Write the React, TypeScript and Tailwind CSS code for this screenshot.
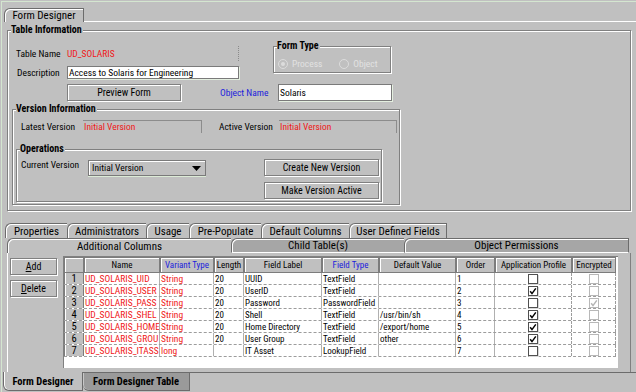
import React from 'react';

const etched = 'border border-[#808080] shadow-[inset_1px_1px_0_#fff,1px_1px_0_#fff]';
const red = 'text-[#f01818]';
const blue = 'text-[#1c1cdc]';
const lbl = 'text-[9.5px] leading-[12px] whitespace-nowrap';

type Row = {
  n: number;
  name: string;
  vt: string;
  len: string;
  label: string;
  ft: string;
  def: string;
  order: string;
  app: boolean;
  enc: boolean;
};

// names are cut at the column edge, as the table shows them
const rows: Row[] = [
  { n: 1, name: 'UD_SOLARIS_UID', vt: 'String', len: '20', label: 'UUID', ft: 'TextField', def: '', order: '1', app: false, enc: false },
  { n: 2, name: 'UD_SOLARIS_USER', vt: 'String', len: '20', label: 'UserID', ft: 'TextField', def: '', order: '2', app: true, enc: false },
  { n: 3, name: 'UD_SOLARIS_PASS', vt: 'String', len: '20', label: 'Password', ft: 'PasswordField', def: '', order: '3', app: false, enc: true },
  { n: 4, name: 'UD_SOLARIS_SHEL', vt: 'String', len: '20', label: 'Shell', ft: 'TextField', def: '/usr/bin/sh', order: '4', app: true, enc: false },
  { n: 5, name: 'UD_SOLARIS_HOME', vt: 'String', len: '20', label: 'Home Directory', ft: 'TextField', def: '/export/home', order: '5', app: true, enc: false },
  { n: 6, name: 'UD_SOLARIS_GROU', vt: 'String', len: '20', label: 'User Group', ft: 'TextField', def: 'other', order: '6', app: true, enc: false },
  { n: 7, name: 'UD_SOLARIS_ITASS', vt: 'long', len: '', label: 'IT Asset', ft: 'LookupField', def: '', order: '7', app: false, enc: false },
];

function GroupBox({ title, className, children }: { title: string; className?: string; children?: React.ReactNode }) {
  return (
    <div className={`relative ${etched} ${className ?? ''}`}>
      <span className="absolute -top-[7px] left-[3px] whitespace-nowrap bg-[#c0c0c0] pr-[1px] text-[10px] font-bold leading-[12px] text-black">
        {title}
      </span>
      {children}
    </div>
  );
}

function Btn({ children, className }: { children: React.ReactNode; className?: string }) {
  return (
    <div className={`flex items-center justify-center whitespace-nowrap bg-[#c0c0c0] text-[10px] leading-[12px] ${etched} ${className ?? ''}`}>
      {children}
    </div>
  );
}

function Field({ value, className }: { value: string; className?: string }) {
  return (
    <div
      className={`flex items-center whitespace-nowrap bg-white pl-[1px] text-[9.5px] leading-[12px] border border-[#7a7a7a] shadow-[1px_1px_0_#e4efe0] ${className ?? ''}`}
    >
      {value}
    </div>
  );
}

function Tab({ label, className, dark }: { label: string; className?: string; dark?: boolean }) {
  return (
    <div
      className={`flex items-center justify-center rounded-tl-[6px] border-t border-l border-[#6c6c6c] shadow-[inset_1px_1px_0_#fff] text-[11px] leading-[13px] whitespace-nowrap ${
        dark ? 'bg-[#a6a6a6]' : 'bg-[#c0c0c0]'
      } ${className ?? ''}`}
    >
      {label}
    </div>
  );
}

function Check({ checked, disabled }: { checked: boolean; disabled?: boolean }) {
  return (
    <div
      className={`flex h-[10px] w-[10px] items-center justify-center bg-white border ${
        disabled ? 'border-[#b8b8b8]' : 'border-[#505050] shadow-[1px_1px_0_#d8d8d8]'
      }`}
    >
      {checked && (
        <svg width="8" height="8" viewBox="0 0 8 8">
          <path d="M1.2 4.2 L3 6.6 L6.8 1.4" stroke={disabled ? '#b4b4b4' : '#000'} strokeWidth="1.5" fill="none" />
        </svg>
      )}
    </div>
  );
}

function Radio({ on, label }: { on?: boolean; label: string }) {
  return (
    <div className="flex items-center gap-[4px] text-[9.5px] leading-[12px] text-[#e2e2e2]">
      <div className="flex h-[10px] w-[10px] items-center justify-center rounded-full border border-[#dcdcdc]">
        {on && <div className="h-[4px] w-[4px] rounded-full bg-[#dcdcdc]" />}
      </div>
      {label}
    </div>
  );
}

const headCell = 'flex items-center justify-center h-full border border-[#7c7c7c] shadow-[inset_1px_1px_0_#fff] bg-[#c0c0c0] whitespace-nowrap overflow-hidden';
const cell = 'h-full overflow-hidden whitespace-nowrap pl-[1px] border-r border-[#b0b0b0]';

export default function App() {
  return (
    <div className="font-['Roboto_Condensed','Liberation_Sans',sans-serif] w-[636px] h-[392px] overflow-hidden bg-[#c0c0c0] pt-[1px] pl-[1px] text-black">
      <div className="flex h-full flex-col border-t border-l border-[#d4e6d0]">
        {/* top tab strip */}
        <div className="flex h-[20px] items-end">
          <Tab label="Form Designer" className="ml-[2px] h-[14px] w-[80px] border-r" />
          <div className="flex-1 border-b border-white" />
        </div>

        {/* Table Information */}
        <GroupBox title="Table Information" className="ml-[5px] mt-[8px] h-[181px] w-[624px]">
          <div className="flex pt-[15px]">
            <div className="flex flex-col pl-[8px]">
              <div className={`flex h-[15px] items-center ${lbl}`}>
                <span className="w-[51px]">Table Name</span>
                <span className={`flex h-full w-[172px] items-center border-r border-dotted border-[#8a8a8a] ${red}`}>UD_SOLARIS</span>
              </div>
              <div className={`mt-[5px] flex h-[13px] items-center ${lbl}`}>
                <span className="w-[51px] pl-[1px]">Description</span>
                <Field value="Access to Solaris for Engineering" className="h-[13px] w-[172px]" />
              </div>
            </div>
            <GroupBox title="Form Type" className="ml-[34px] h-[27px] w-[118px]">
              <div className="mt-[11px] flex gap-[17px] pl-[4px]">
                <Radio on label="Process" />
                <Radio label="Object" />
              </div>
            </GroupBox>
          </div>
          <div className="mt-[5px] flex items-center pl-[59px]">
            <Btn className="h-[17px] w-[114px]">Preview Form</Btn>
            <span className={`ml-[39px] w-[58px] ${lbl} ${blue}`}>Object Name</span>
            <Field value="Solaris" className="h-[17px] w-[114px]" />
          </div>

          {/* Version Information */}
          <GroupBox title="Version Information" className="ml-[4px] mt-[8px] h-[96px] w-[388px]">
            <div className={`mt-[10px] flex items-center pl-[8px] ${lbl}`}>
              <span className="w-[62px]">Latest Version</span>
              <div className={`flex h-[13px] w-[119px] items-center border-t border-r border-[#8c8c8c] pl-[1px] ${red}`}>Initial Version</div>
              <span className="ml-[17px] w-[60px]">Active Version</span>
              <div className={`flex h-[13px] w-[118px] items-center border-t border-r border-[#8c8c8c] pl-[1px] ${red}`}>Initial Version</div>
            </div>
            <GroupBox title="Operations" className="ml-[3px] mt-[16px] h-[53px] w-[366px]">
              <div className="flex pl-[4px]">
                <span className={`mt-[9px] w-[67px] ${lbl}`}>Current Version</span>
                <div className={`mt-[10px] flex h-[16px] w-[118px] items-center justify-between border border-[#7a7a7a] shadow-[inset_1px_1px_0_#fff,0_1px_0_#dcebd6] pl-[3px] pr-[4px] ${lbl}`}>
                  Initial Version
                  <svg width="9" height="5" viewBox="0 0 9 5">
                    <path d="M0 0 H9 L4.5 5 Z" fill="#000" />
                  </svg>
                </div>
                <div className="ml-[58px] mt-[9px] flex flex-col gap-[6px]">
                  <Btn className="h-[17px] w-[115px]">Create New Version</Btn>
                  <Btn className="h-[17px] w-[115px]">Make Version Active</Btn>
                </div>
              </div>
            </GroupBox>
          </GroupBox>
        </GroupBox>

        {/* lower tabbed pane */}
        <div className="ml-[3px] mt-[12px] flex h-[15px]">
          <Tab label="Properties" className="w-[62px]" />
          <Tab label="Administrators" className="w-[79px]" />
          <Tab label="Usage" className="w-[43px]" />
          <Tab label="Pre-Populate" className="w-[72px]" />
          <Tab label="Default Columns" className="w-[88px]" />
          <Tab label="User Defined Fields" className="w-[98px] border-r" />
        </div>
        <div className="ml-[5px] flex h-[15px]">
          <Tab label="Additional Columns" className="w-[224px]" />
          <Tab label="Child Table(s)" dark className="w-[173px] border-b border-b-white" />
          <Tab label="Object Permissions" dark className="w-[225px] border-r border-b border-b-white" />
        </div>
        <div className="ml-[5px] flex h-[119px] w-[624px] border-l border-white border-r border-r-[#808080]">
          <div className="flex w-[55px] flex-col gap-[5px] pl-[2px] pt-[5px]">
            <Btn className="h-[17px] w-[47px]">
              <span className="underline underline-offset-1">A</span>dd
            </Btn>
            <Btn className="h-[17px] w-[47px]">
              <span className="underline underline-offset-1">D</span>elete
            </Btn>
          </div>
          <div className="mt-[3px] h-[112px] w-[555px] border-l border-t border-[#808080] bg-white text-[9px] leading-[12px]">
            <div className="flex h-[16px]">
              <div className={`${headCell} w-[20px]`} />
              <div className={`${headCell} w-[76px]`}>Name</div>
              <div className={`${headCell} w-[54px] ${blue}`}>Variant Type</div>
              <div className={`${headCell} w-[30px]`}>Length</div>
              <div className={`${headCell} w-[78px]`}>Field Label</div>
              <div className={`${headCell} w-[57px] ${blue}`}>Field Type</div>
              <div className={`${headCell} w-[77px]`}>Default Value</div>
              <div className={`${headCell} w-[39px]`}>Order</div>
              <div className={`${headCell} w-[77px]`}>Application Profile</div>
              <div className={`${headCell} w-[44px]`}>Encrypted</div>
            </div>
            {rows.map((r) => (
              <div key={r.n} className="flex h-[12px] w-[552px] border-b border-dashed border-[#9c9c9c]">
                <div className="flex h-full w-[20px] items-center justify-center border-x border-[#7c7c7c] bg-[#c0c0c0] shadow-[inset_1px_0_0_#fff] text-[10.5px]">
                  {r.n}
                </div>
                <div className={`${cell} w-[76px] text-[9.5px] ${red}`}>{r.name}</div>
                <div className={`${cell} w-[54px] text-[9.5px] ${red}`}>{r.vt}</div>
                <div className={`${cell} w-[30px]`}>{r.len}</div>
                <div className={`${cell} w-[78px]`}>{r.label}</div>
                <div className={`${cell} w-[57px]`}>{r.ft}</div>
                <div className={`${cell} w-[77px]`}>{r.def}</div>
                <div className={`${cell} w-[39px]`}>{r.order}</div>
                <div className="flex h-full w-[77px] items-center justify-center border-r border-dashed border-[#9c9c9c]">
                  <Check checked={r.app} />
                </div>
                <div className="flex h-full w-[44px] items-center justify-center border-r border-dashed border-[#9c9c9c]">
                  <Check checked={r.enc} disabled />
                </div>
              </div>
            ))}
          </div>
        </div>

        {/* bottom tabs */}
        <div className="flex h-[20px]">
          <div className="ml-[1px] flex h-[19px] w-[80px] items-center justify-center whitespace-nowrap rounded-bl-[6px] border-l border-b border-r border-[#6c6c6c] shadow-[inset_1px_0_0_#fff] text-[10.5px] font-bold leading-[13px]">
            Form Designer
          </div>
          <div className="flex h-[19px] w-[107px] items-center justify-center whitespace-nowrap rounded-bl-[6px] border-t border-b border-r border-[#6c6c6c] bg-[#9a9a9a] shadow-[inset_1px_0_0_#c8c8c8] text-[10.5px] font-bold leading-[13px]">
            Form Designer Table
          </div>
          <div className="flex-1 border-t border-[#6c6c6c]" />
        </div>
      </div>
    </div>
  );
}
